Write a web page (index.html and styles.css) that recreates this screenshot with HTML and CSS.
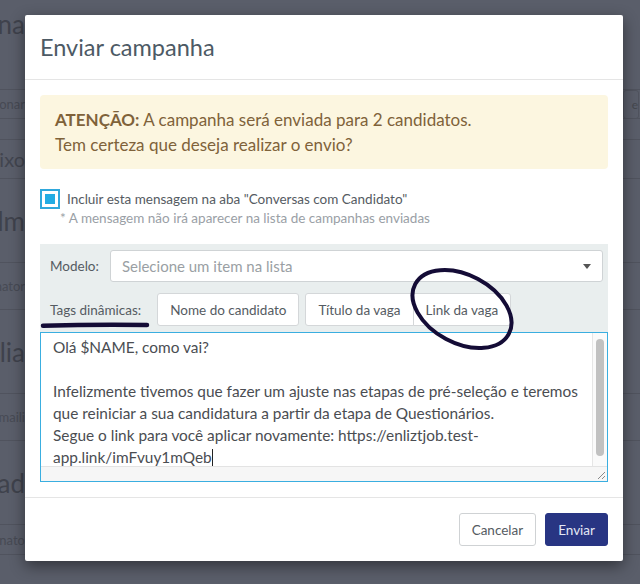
FILE: index.html
```html
<!DOCTYPE html>
<html>
<head>
  <meta charset="utf-8">
  <title>Enviar campanha</title>
  <link rel="stylesheet" href="styles.css">
</head>
<body>
  <div class="page">
    <div class="page-row row-title"><span class="frag big">na</span><span class="side"></span></div>
    <div class="page-row row-a"><span class="frag small">onar</span><span class="side"><span class="side-box">e</span></span></div>
    <div class="page-row row-b"><span class="frag"></span><span class="side"></span></div>
    <div class="page-row row-c"><span class="frag mid">ixo</span><span class="side"></span></div>
    <div class="page-row row-d"><span class="frag big">alm</span><span class="side"></span></div>
    <div class="page-row row-e"><span class="frag small">nator</span><span class="side"></span></div>
    <div class="page-row row-d"><span class="frag big">ulia</span><span class="side"></span></div>
    <div class="page-row row-e"><span class="frag small">maili</span><span class="side"></span></div>
    <div class="page-row row-d"><span class="frag big">had</span><span class="side"></span></div>
    <div class="page-row row-f"><span class="frag small">nato</span><span class="side"></span></div>
  </div>

  <div class="modal">
    <div class="modal-header">
      <h4 class="modal-title">Enviar campanha</h4>
    </div>

    <div class="modal-body">
      <div class="alert">
        <strong>ATENÇÃO:</strong> A campanha será enviada para 2 candidatos.<br>
        Tem certeza que deseja realizar o envio?
      </div>

      <label class="check-row">
        <span class="check-box"><span class="check-fill"></span></span>
        <span class="check-label">Incluir esta mensagem na aba "Conversas com Candidato"</span>
      </label>
      <div class="check-note">* A mensagem não irá aparecer na lista de campanhas enviadas</div>

      <div class="template-panel">
        <div class="panel-row">
          <span class="panel-label">Modelo:</span>
          <div class="select">
            <span class="select-placeholder">Selecione um item na lista</span>
            <span class="select-caret"></span>
          </div>
        </div>
        <div class="panel-row tags-row">
          <span class="panel-label tags-label">Tags dinâmicas:</span>
          <button class="tag-btn">Nome do candidato</button>
          <button class="tag-btn tag-title">Título da vaga</button>
          <button class="tag-btn tag-link">Link da vaga</button>
        </div>
      </div>

      <div class="message-box">
        <div class="message-text">Olá $NAME, como vai?<br>
          <br>
          Infelizmente tivemos que fazer um ajuste nas etapas de pré-seleção e teremos<br>
          que reiniciar a sua candidatura a partir da etapa de Questionários.<br>
          Segue o link para você aplicar novamente: https://enliztjob.test-<br>
          app.link/imFvuy1mQeb<span class="caret"></span></div>
        <div class="vscroll"><div class="vthumb"></div></div>
        <div class="hscroll">
          <svg class="grip" width="10" height="10" viewBox="0 0 10 10">
            <path d="M2 9 L9 2 M6 9 L9 6" stroke="#8a8a8a" stroke-width="1" fill="none"/>
          </svg>
        </div>
      </div>
    </div>

    <div class="modal-footer">
      <button class="btn btn-default">Cancelar</button>
      <button class="btn btn-primary">Enviar</button>
    </div>
  </div>

  <svg class="marks" width="640" height="584" viewBox="0 0 640 584">
    <path d="M43 325.8 Q95 324.2 147 325" stroke="#140c36" stroke-width="4.5" stroke-linecap="round" fill="none"/>
    <ellipse cx="462" cy="309" rx="53" ry="34" transform="rotate(28 462 309)" stroke="#140c36" stroke-width="4" fill="none"/>
  </svg>
</body>
</html>
```

FILE: styles.css
```css
body {
  margin: 0;
  width: 640px;
  height: 584px;
  overflow: hidden;
  position: relative;
  background: #5a5e6a;
  font-family: 'Lato', 'Open Sans', sans-serif;
}

/* page behind the backdrop */
.page {
  display: flex;
  flex-direction: column;
}

.page-row {
  display: flex;
  align-items: center;
  justify-content: space-between;
  border-bottom: 1px solid #50535e;
}

.row-title { height: 89px; align-items: flex-start; }
.row-a { height: 28px; }
.row-b { height: 20px; }
.row-c { height: 38px; }
.row-d { height: 83px; }
.row-e { height: 46px; }
.row-f { height: 29px; }

.frag {
  width: 25px;
  display: flex;
  justify-content: flex-end;
  overflow: hidden;
  white-space: nowrap;
  color: #3f424c;
}

.frag.big { font-size: 26px; }
.row-title .frag { margin-top: 8px; }
.frag.mid { font-size: 20px; color: #42454f; }
.frag.small { font-size: 13px; color: #474a54; }

.side {
  width: 17px;
  display: flex;
}

.side-box {
  width: 14px;
  height: 27px;
  border: 1px solid #50535e;
  border-radius: 3px;
  font-size: 12px;
  color: #45484f;
  display: flex;
  align-items: center;
  justify-content: flex-end;
  overflow: hidden;
}

/* modal */
.modal {
  position: absolute;
  left: 25px;
  top: 15px;
  width: 598px;
  background: white;
  border-radius: 2px;
  box-shadow: 0 5px 15px rgba(0, 0, 0, 0.45);
  color: #555;
}

.modal-header {
  padding: 15px;
  border-bottom: 1px solid #e5e5e5;
}

.modal-title {
  margin: 0;
  font-size: 23.5px;
  line-height: 34px;
  font-weight: 400;
  color: #4d5a65;
}

.modal-body {
  padding: 15px;
}

.alert {
  background: #fcf6e0;
  color: #7f623a;
  border-radius: 4px;
  padding: 12px 15px;
  font-size: 17px;
  line-height: 25px;
}

.alert strong {
  font-weight: 700;
}

.check-row {
  display: flex;
  align-items: center;
  margin-top: 20px;
  height: 20px;
}

.check-box {
  box-sizing: border-box;
  width: 20px;
  height: 20px;
  border: 2px solid #2fa8dc;
  padding: 3px;
  display: flex;
}

.check-fill {
  flex: 1;
  background: #22ace3;
}

.check-label {
  margin-left: 7px;
  font-size: 13.5px;
  color: #555b62;
}

.check-note {
  margin-left: 20px;
  font-size: 13.5px;
  line-height: 18px;
  color: #9aa0a6;
}

.template-panel {
  margin-top: 17px;
  background: #e9eeee;
  padding: 6px 5px 6px 10px;
}

.panel-row {
  display: flex;
  align-items: center;
}

.panel-label {
  font-size: 13.5px;
  color: #555b62;
  margin-right: 11px;
}

.select {
  flex: 1;
  height: 32px;
  box-sizing: border-box;
  background: white;
  border: 1px solid #cfd3d5;
  border-radius: 3px;
  display: flex;
  align-items: center;
  justify-content: space-between;
  padding: 0 11px;
}

.select-placeholder {
  font-size: 15px;
  color: #9a9fa4;
}

.select-caret {
  width: 0;
  height: 0;
  border-left: 4px solid transparent;
  border-right: 4px solid transparent;
  border-top: 5px solid #555;
}

.tags-row {
  margin-top: 11px;
}

.tags-label {
  margin-right: 16px;
}

.tag-btn {
  height: 33px;
  box-sizing: border-box;
  background: white;
  border: 1px solid #d4d7d9;
  border-radius: 3px;
  padding: 0 12px;
  font-family: inherit;
  font-size: 13.5px;
  color: #555b62;
}

.tag-title {
  margin-left: 6px;
  border-radius: 3px 0 0 3px;
}

.tag-link {
  margin-left: -1px;
  border-radius: 0 3px 3px 0;
}

.message-box {
  position: relative;
  height: 150px;
  box-sizing: border-box;
  border: 1px solid #3aaee0;
  background: white;
  overflow: hidden;
}

.message-text {
  padding: 3px 0 0 12px;
  font-size: 15.4px;
  line-height: 22px;
  color: #4a4d52;
  white-space: nowrap;
}

.caret {
  display: inline-block;
  width: 1px;
  height: 18px;
  background: #222;
  vertical-align: -4px;
}

.vscroll {
  position: absolute;
  top: 0;
  right: 0;
  bottom: 15px;
  width: 14px;
  background: #fafafa;
  border-left: 1px solid #e6e6e6;
}

.vthumb {
  margin: 6px 3px 0 3px;
  height: 117px;
  background: #c1c1c1;
  border-radius: 4px;
}

.hscroll {
  position: absolute;
  left: 0;
  right: 0;
  bottom: 0;
  height: 14px;
  background: #f6f6f6;
  border-top: 1px solid #e3e3e3;
  display: flex;
  justify-content: flex-end;
  align-items: flex-end;
}

.grip {
  margin: 0 1px 1px 0;
}

.modal-footer {
  border-top: 1px solid #e5e5e5;
  padding: 15px;
  display: flex;
  justify-content: flex-end;
  gap: 9px;
}

.btn {
  height: 33px;
  box-sizing: border-box;
  border-radius: 3px;
  padding: 0 12px;
  font-family: inherit;
  font-size: 13.5px;
}

.btn-default {
  background: white;
  border: 1px solid #cfd2d4;
  color: #555b62;
}

.btn-primary {
  background: #283583;
  border: 1px solid #283583;
  color: #e4e7f4;
}

.marks {
  position: absolute;
  left: 0;
  top: 0;
  pointer-events: none;
}
```
